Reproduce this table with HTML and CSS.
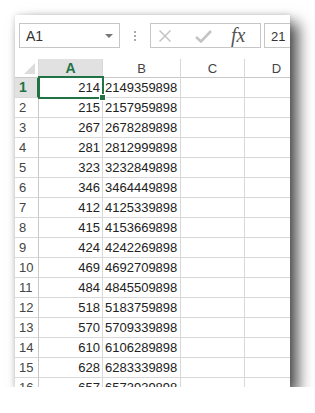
FILE: index.html
```html
<!DOCTYPE html>
<html lang="en">
<head>
    <meta charset="UTF-8">
    <title>Sheet</title>
    <link rel="stylesheet" href="styles.css">
</head>
<body>
    <div class="window">
        <div class="toolbar">
            <div class="namebox">
                <span>A1</span>
                <span class="arrow"></span>
            </div>
            <div class="dots"><i></i><i></i><i></i></div>
            <div class="buttons">
                <svg class="cancel" width="12" height="12" viewBox="0 0 12 12"><path d="M0.5 0.5 L11.5 11.5 M11.5 0.5 L0.5 11.5" stroke="#c4c4c4" stroke-width="1.5" fill="none"/></svg>
                <svg class="enter" width="17" height="13" viewBox="0 0 17 13"><path d="M1 7 L6 11.5 L16 1" stroke="#c4c4c4" stroke-width="2.6" fill="none"/></svg>
                <span class="fx">fx</span>
            </div>
            <div class="formula">21</div>
        </div>
        <div class="sheet">
            <div class="corner"></div>
            <div class="colhead sel">A</div>
            <div class="colhead">B</div>
            <div class="colhead">C</div>
            <div class="colhead">D</div>

            <div class="rowhead sel">1</div><div class="cell num active">214</div><div class="cell">2149359898</div><div class="cell"></div><div class="cell"></div>
            <div class="rowhead">2</div><div class="cell num">215</div><div class="cell">2157959898</div><div class="cell"></div><div class="cell"></div>
            <div class="rowhead">3</div><div class="cell num">267</div><div class="cell">2678289898</div><div class="cell"></div><div class="cell"></div>
            <div class="rowhead">4</div><div class="cell num">281</div><div class="cell">2812999898</div><div class="cell"></div><div class="cell"></div>
            <div class="rowhead">5</div><div class="cell num">323</div><div class="cell">3232849898</div><div class="cell"></div><div class="cell"></div>
            <div class="rowhead">6</div><div class="cell num">346</div><div class="cell">3464449898</div><div class="cell"></div><div class="cell"></div>
            <div class="rowhead">7</div><div class="cell num">412</div><div class="cell">4125339898</div><div class="cell"></div><div class="cell"></div>
            <div class="rowhead">8</div><div class="cell num">415</div><div class="cell">4153669898</div><div class="cell"></div><div class="cell"></div>
            <div class="rowhead">9</div><div class="cell num">424</div><div class="cell">4242269898</div><div class="cell"></div><div class="cell"></div>
            <div class="rowhead">10</div><div class="cell num">469</div><div class="cell">4692709898</div><div class="cell"></div><div class="cell"></div>
            <div class="rowhead">11</div><div class="cell num">484</div><div class="cell">4845509898</div><div class="cell"></div><div class="cell"></div>
            <div class="rowhead">12</div><div class="cell num">518</div><div class="cell">5183759898</div><div class="cell"></div><div class="cell"></div>
            <div class="rowhead">13</div><div class="cell num">570</div><div class="cell">5709339898</div><div class="cell"></div><div class="cell"></div>
            <div class="rowhead">14</div><div class="cell num">610</div><div class="cell">6106289898</div><div class="cell"></div><div class="cell"></div>
            <div class="rowhead">15</div><div class="cell num">628</div><div class="cell">6283339898</div><div class="cell"></div><div class="cell"></div>
            <div class="rowhead">16</div><div class="cell num">657</div><div class="cell">6573939898</div><div class="cell"></div><div class="cell"></div>
        </div>
    </div>
</body>
</html>
```

FILE: styles.css
```css
body {
    margin: 0;
    background: #fff;
    font-family: 'Liberation Sans', Arial, sans-serif;
}

.window {
    margin: 15px 0 0 15px;
    width: 275px;
    height: 372px;
    overflow: hidden;
    background: #fff;
    box-shadow: 8px 8px 14px rgba(0, 0, 0, 0.7), 0 0 5px rgba(0, 0, 0, 0.15);
}

.toolbar {
    height: 44px;
    display: flex;
    align-items: flex-start;
    padding: 8px 0 0 4px;
    box-sizing: border-box;
}

.toolbar > * {
    flex-shrink: 0;
}

.namebox {
    width: 101px;
    height: 25px;
    border: 1px solid #c6c6c6;
    box-sizing: border-box;
    display: flex;
    align-items: center;
    justify-content: space-between;
    padding: 0 6px 0 6px;
    font-size: 14px;
    color: #333;
}

.arrow {
    border-left: 4px solid transparent;
    border-right: 4px solid transparent;
    border-top: 4px solid #777;
}

.dots {
    width: 30px;
    height: 25px;
    display: flex;
    flex-direction: column;
    align-items: center;
    justify-content: center;
    gap: 2px;
}

.dots i {
    width: 2px;
    height: 2px;
    background: #aaa;
}

.buttons {
    width: 111px;
    height: 25px;
    border: 1px solid #c6c6c6;
    box-sizing: border-box;
    display: flex;
    align-items: center;
    padding: 0 0 0 8px;
}

.enter {
    margin-left: 24px;
    margin-top: 2px;
}

.fx {
    font-family: 'Liberation Serif', serif;
    font-style: italic;
    font-size: 20px;
    color: #555;
    margin-left: 19px;
}

.formula {
    margin-left: 3px;
    width: 40px;
    height: 25px;
    border: 1px solid #c6c6c6;
    box-sizing: border-box;
    font-size: 13px;
    color: #333;
    padding: 5px 0 0 6px;
}

.sheet {
    display: grid;
    grid-template-columns: 24px 64px 78px 64px 64px;
    grid-template-rows: 19px;
    grid-auto-rows: 20px;
    font-size: 13px;
    color: #222;
}

.sheet > div {
    border-right: 1px solid #d8d8d8;
    border-bottom: 1px solid #d8d8d8;
    box-sizing: border-box;
    line-height: 19px;
    white-space: nowrap;
    overflow: hidden;
}

.corner {
    position: relative;
    border-bottom-color: #c8c8c8 !important;
}

.corner::after {
    content: "";
    position: absolute;
    right: 3px;
    bottom: 3px;
    border-left: 11px solid transparent;
    border-bottom: 11px solid #dcdcdc;
}

.colhead {
    text-align: center;
    color: #444;
    border-bottom-color: #c8c8c8 !important;
}

.colhead.sel {
    background: #e1e1e1;
    color: #217346;
    font-weight: bold;
    font-size: 14px;
    border-bottom: 2px solid #217346 !important;
}

.rowhead {
    padding-left: 4px;
    color: #444;
    border-right-color: #c8c8c8 !important;
}

.rowhead.sel {
    background: #e1e1e1;
    color: #217346;
    font-weight: bold;
    font-size: 14px;
    border-right: 2px solid #217346 !important;
}

.cell {
    padding: 0 2px;
}

.num {
    text-align: right;
}

.sheet > .active {
    overflow: visible;
    position: relative;
}

.active::after {
    content: "";
    position: absolute;
    left: -1px;
    top: -2px;
    right: -2px;
    bottom: -2px;
    border: 2px solid #217346;
}

.active::before {
    content: "";
    position: absolute;
    right: -4px;
    bottom: -4px;
    width: 5px;
    height: 5px;
    background: #217346;
    border: 1px solid #fff;
    z-index: 2;
}
```
